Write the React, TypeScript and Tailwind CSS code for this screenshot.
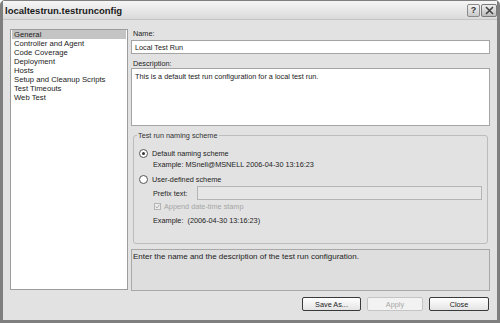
const font = { fontFamily: '"Liberation Sans", Arial, sans-serif' };

const pages = [
  'General',
  'Controller and Agent',
  'Code Coverage',
  'Deployment',
  'Hosts',
  'Setup and Cleanup Scripts',
  'Test Timeouts',
  'Web Test',
];

function Radio({ checked }: { checked?: boolean }) {
  return (
    <span className="w-[9px] h-[9px] rounded-full border border-[#555] bg-white flex items-center justify-center shrink-0">
      {checked && <span className="w-[3px] h-[3px] rounded-full bg-[#333]" />}
    </span>
  );
}

function Button({ label, disabled }: { label: string; disabled?: boolean }) {
  return (
    <div
      className={
        disabled
          ? 'h-[14px] flex items-center justify-center rounded-[2px] border border-[#c4c4c4] bg-[#f2f2f2] text-[#a8a8a8]'
          : 'h-[14px] flex items-center justify-center rounded-[2px] border border-[#3a3a3a] bg-gradient-to-b from-[#ffffff] to-[#e4e4e4] text-[#222]'
      }
    >
      {label}
    </div>
  );
}

export default function App() {
  return (
    <div
      className="w-[500px] h-[323px] flex flex-col bg-[#e2e2e2] border-x-[3px] border-b-[3px] border-t border-[#7f7f7f] rounded-t-[5px] text-[7.3px] leading-[9px] text-[#222]"
      style={font}
    >
      {/* Title bar */}
      <div className="h-[19px] shrink-0 flex items-center justify-between pl-[2px] pr-0 bg-gradient-to-b from-[#f6f6f6] to-[#dadada] border-b border-[#c4c4c4]">
        <span className="text-[9.5px] font-bold text-[#1a1a1a]">localtestrun.testrunconfig</span>
        <div className="flex items-center gap-[1px]">
          <div className="w-[13px] h-[13px] rounded-[2px] border border-[#8a8a8a] bg-gradient-to-b from-[#f4f4f4] to-[#c8c8c8] flex items-center justify-center text-[9px] font-bold text-[#333]">
            ?
          </div>
          <div className="w-[16px] h-[13px] rounded-[2px] border border-[#7a7a7a] bg-gradient-to-b from-[#eeeeee] to-[#bdbdbd] flex items-center justify-center">
            <svg width="9" height="9" viewBox="0 0 9 9">
              <path d="M1 1 L8 8 M8 1 L1 8" stroke="#444" strokeWidth="1.6" />
            </svg>
          </div>
        </div>
      </div>

      {/* Body */}
      <div className="flex-1 flex flex-col pl-[7px] pr-[7px] pt-[9px]">
        <div className="flex items-start gap-[3px]">
          {/* Page list */}
          <div className="w-[118px] h-[261px] bg-white border border-[#9c9c9c] px-[1px] text-[7.7px]">
            {pages.map((p, i) => (
              <div
                key={p}
                className={i === 0 ? 'h-[9px] pl-[2px] bg-[#c4c4c4]' : 'h-[9px] pl-[2px]'}
              >
                {p}
              </div>
            ))}
          </div>

          {/* Settings */}
          <div className="flex-1 flex flex-col">
            <div className="pl-[2px] h-[9px]">Name:</div>
            <div className="mt-[2px] h-[14px] bg-white border border-[#a4a4a4] flex items-center pl-[3px]">
              Local Test Run
            </div>
            <div className="pl-[2px] h-[9px] mt-[5px]">Description:</div>
            <div className="h-[58px] bg-white border border-[#a4a4a4] pl-[3px] pt-[3px]">
              This is a default test run configuration for a local test run.
            </div>

            {/* Naming scheme group */}
            <div className="relative mt-[9px] mx-[2px] h-[109px] border border-[#bcbcbc] rounded-[3px] pl-[5px] pt-[12px]">
              <span className="absolute -top-[5px] left-[3px] px-[1px] bg-[#e2e2e2] text-[#333]">
                Test run naming scheme
              </span>
              <div className="flex items-center gap-[4px] h-[10px]">
                <Radio checked />
                <span>Default naming scheme</span>
              </div>
              <div className="pl-[14px] mt-[2px] h-[9px]">Example: MSnell@MSNELL 2006-04-30 13:16:23</div>
              <div className="flex items-center gap-[4px] h-[10px] mt-[5px]">
                <Radio />
                <span>User-defined scheme</span>
              </div>
              <div className="flex items-center mt-[2px] pl-[14px] pr-[5px] h-[14px]">
                <span className="w-[44px] shrink-0">Prefix text:</span>
                <div className="flex-1 h-[14px] border border-[#b4b4b4] bg-[#e6e6e6]" />
              </div>
              <div className="flex items-center gap-[3px] pl-[15px] mt-[2px] h-[9px] text-[#a6a6a6]">
                <span className="w-[7px] h-[7px] border border-[#b4b4b4] bg-[#ececec] flex items-center justify-center">
                  <svg width="5" height="5" viewBox="0 0 5 5">
                    <path d="M0.5 2.5 L2 4 L4.5 0.8" stroke="#b0b0b0" strokeWidth="1" fill="none" />
                  </svg>
                </span>
                <span>Append date-time stamp</span>
              </div>
              <div className="pl-[14px] mt-[5px] h-[9px]">Example:&nbsp; (2006-04-30 13:16:23)</div>
            </div>

            {/* Help text */}
            <div className="mt-[5px] h-[42px] border border-[#a8a8a8] bg-[#dedede] pl-[1px] pt-[2px] text-[8px]">
              Enter the name and the description of the test run configuration.
            </div>
          </div>
        </div>

        {/* Buttons */}
        <div className="flex justify-end gap-[6px] mt-[6px] mr-[1px]">
          <div className="w-[59px]">
            <Button label="Save As..." />
          </div>
          <div className="w-[56px]">
            <Button label="Apply" disabled />
          </div>
          <div className="w-[60px]">
            <Button label="Close" />
          </div>
        </div>
      </div>
    </div>
  );
}
